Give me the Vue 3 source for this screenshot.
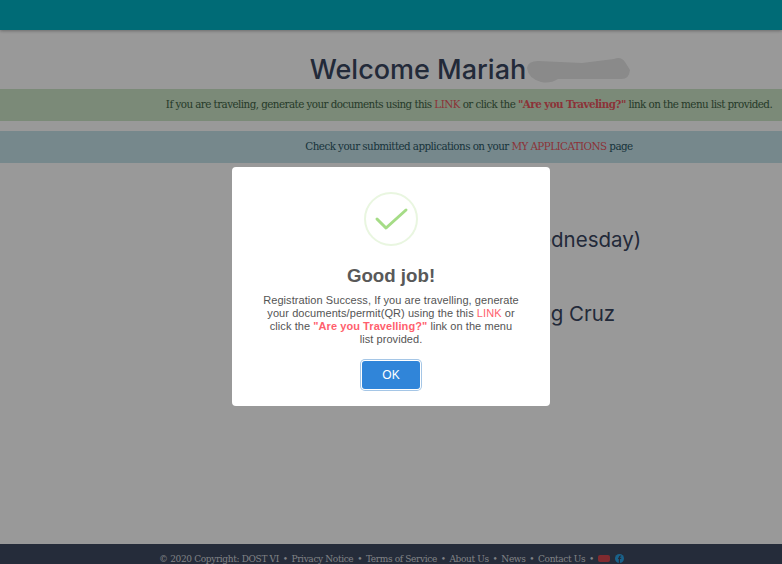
<template>
  <div class="page">
    <header class="topbar"></header>
    <main class="content">
      <h1 class="welcome">
        <span class="who">Welcome Mariah
          <svg class="smudge" width="104" height="28" viewBox="0 0 104 28">
            <path d="M1 12 Q2 5 12 5 L56 7 L88 3 Q95 0 99 6 L104 14 Q103 24 94 23 L32 23 Q24 28 15 26 Q2 22 1 12 Z" fill="#e6e6e6" />
          </svg>
        </span>
      </h1>
      <div class="banner green">
        <p>If you are traveling, generate your documents using this <a>LINK</a> or click the <b>"Are you Traveling?"</b> link on the menu list provided.</p>
      </div>
      <div class="banner blue">
        <p>Check your submitted applications on your <a>MY APPLICATIONS</a> page</p>
      </div>
      <p class="info first">December 30, 2020 (Wednesday)</p>
      <p class="info second">Mariah Santiago Young Cruz</p>
    </main>
    <footer class="foot">
      <span>© 2020 Copyright: DOST VI</span><i>•</i>
      <span>Privacy Notice</span><i>•</i>
      <span>Terms of Service</span><i>•</i>
      <span>About Us</span><i>•</i>
      <span>News</span><i>•</i>
      <span>Contact Us</span><i>•</i>
      <svg class="yt" width="12" height="7" viewBox="0 0 12 7"><rect width="12" height="7" rx="2" fill="#d5464f" /></svg>
      <svg class="fb" width="9" height="9" viewBox="0 0 9 9"><circle cx="4.500" cy="4.500" r="4.500" fill="#2aa4e8" /><path d="M5 9V5h1.200V3.800H5V3.200q0-.6.7-.6h.5V1.500H5.400Q3.800 1.500 3.800 3v.8H3V5h.8v4Z" fill="#3e4a61" /></svg>
    </footer>

    <div class="overlay">
      <div class="modal">
        <div class="icon">
          <svg width="54" height="54" viewBox="0 0 54 54">
            <circle cx="27" cy="27" r="26" fill="none" stroke="#e9f6e0" stroke-width="2" />
            <path d="M13 27 L22 36 L42 18" fill="none" stroke="#a5dc86" stroke-width="3" stroke-linecap="round" stroke-linejoin="round" />
          </svg>
        </div>
        <h2>Good job!</h2>
        <p class="msg">Registration Success, If you are travelling, generate your documents/permit(QR) using the this <a>LINK</a> or click the <b>"Are you Travelling?"</b> link on the menu list provided.</p>
        <button class="ok">OK</button>
      </div>
    </div>
  </div>
</template>

<script setup>
</script>

<style>
html, body {
  margin: 0;
  height: 100%;
  overflow: hidden;
}
</style>

<style scoped>
.page {
  height: 564px;
  display: flex;
  flex-direction: column;
  background: #fff;
  color: #3a465f;
}

.topbar {
  height: 30px;
  background: #00b2c5;
  box-shadow: 0 1px 3px rgba(0, 0, 0, .3);
}

.content {
  flex: 1;
  padding-top: 20px;
}

.welcome {
  margin: 0 0 0 158px;
  text-align: center;
  font: 500 27px/39px Inter, sans-serif;
  color: #3a465f;
}

.who {
  position: relative;
  padding-right: 104px;
}

.smudge {
  position: absolute;
  right: 0;
  top: 3px;
}

.banner {
  height: 32px;
  box-sizing: border-box;
  padding: 0 0 2px 156px;
  margin-bottom: 10px;
  display: flex;
  align-items: center;
  justify-content: center;
  font: 11.500px "DejaVu Serif Condensed", "DejaVu Serif", serif;
  letter-spacing: -.55px;
  white-space: nowrap;
}

.banner p {
  margin: 0;
}

.banner a,
.banner b {
  color: #e8565e;
}

.green {
  background: #cde6c8;
  color: #3f6346;
}

.blue {
  background: #c5e3ea;
  color: #2a5664;
}

.info {
  margin: 0 0 0 172px;
  text-align: center;
  font: 400 20.500px/28px Inter, sans-serif;
}

.first {
  margin-top: 63px;
}

.second {
  margin-top: 46px;
}

.foot {
  height: 20px;
  box-sizing: border-box;
  padding: 9px 0 0 159px;
  background: #3e4a61;
  color: #d5d8de;
  display: flex;
  align-items: center;
  white-space: nowrap;
  font: 10px "DejaVu Serif Condensed", "DejaVu Serif", serif;
  letter-spacing: -.35px;
  overflow: hidden;
}

.foot i {
  font-style: normal;
  margin: 0 3.800px;
}

.foot svg {
  flex-shrink: 0;
}

.fb {
  margin-left: 5px;
}

.overlay {
  position: fixed;
  inset: 0;
  background: rgba(0, 0, 0, .4);
}

.modal {
  position: absolute;
  left: 232px;
  top: 167px;
  width: 318px;
  height: 239px;
  box-sizing: border-box;
  padding: 25px 30px 0;
  background: #fff;
  border-radius: 4px;
  text-align: center;
  font-family: "Liberation Sans", Arial, sans-serif;
}

.icon {
  height: 54px;
}

.icon svg {
  display: block;
  margin: 0 auto;
}

h2 {
  margin: 19px 0 0;
  font-size: 18.700px;
  line-height: 22px;
  font-weight: 700;
  color: #595959;
}

.msg {
  margin: 7px 0 0;
  font-size: 11px;
  line-height: 13px;
  letter-spacing: .07px;
  color: #545454;
}

.msg a,
.msg b {
  color: #ff5f6d;
}

.ok {
  display: block;
  margin: 15px auto 0;
  width: 58px;
  height: 28px;
  padding: 0;
  border: 0;
  border-radius: 3px;
  background: #3085d9;
  box-shadow: 0 0 0 1px #fff, 0 0 0 2px #a5c6e6;
  color: #fff;
  font: 400 12px "Liberation Sans", Arial, sans-serif;
}
</style>
